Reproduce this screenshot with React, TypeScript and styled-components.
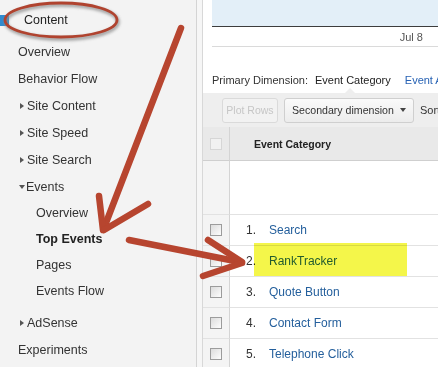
import styled, { createGlobalStyle } from "styled-components";

const GlobalStyle = createGlobalStyle`
  body {
    margin: 0;
    font-family: "Liberation Sans", Arial, sans-serif;
    background: #fff;
  }
`;

type NavEntry = {
  label: string;
  level: 0 | 1;
  caret?: "right" | "down";
  bold?: boolean;
  height: number;
  gapTop?: number;
};

const navEntries: NavEntry[] = [
  { label: "Overview", level: 0, height: 27 },
  { label: "Behavior Flow", level: 0, height: 27 },
  { label: "Site Content", level: 0, caret: "right", height: 27 },
  { label: "Site Speed", level: 0, caret: "right", height: 27 },
  { label: "Site Search", level: 0, caret: "right", height: 27 },
  { label: "Events", level: 0, caret: "down", height: 27 },
  { label: "Overview", level: 1, height: 26 },
  { label: "Top Events", level: 1, bold: true, height: 26 },
  { label: "Pages", level: 1, height: 26 },
  { label: "Events Flow", level: 1, height: 26 },
  { label: "AdSense", level: 0, caret: "right", height: 27, gapTop: 5 },
  { label: "Experiments", level: 0, height: 27 },
];

const events = ["Search", "RankTracker", "Quote Button", "Contact Form", "Telephone Click"];

export default function App() {
  return (
    <>
      <GlobalStyle />
      <Page>
        <Sidebar>
          <SectionHead>
            <SectionIcon />
            Content
          </SectionHead>
          {navEntries.map((item, i) => (
            <NavItem
              key={i}
              $level={item.level}
              $bold={item.bold}
              $height={item.height}
              $gapTop={item.gapTop ?? 0}
              $hasCaret={!!item.caret}
            >
              {item.caret === "right" && <CaretRight />}
              {item.caret === "down" && <CaretDown />}
              {item.label}
            </NavItem>
          ))}
        </Sidebar>
        <Gutter />
        <Main>
          <ChartWrap>
            <ChartFill />
            <Axis>Jul 8</Axis>
          </ChartWrap>
          <DimensionRow>
            <DimLabel>Primary Dimension:</DimLabel>
            <DimActive>Event Category</DimActive>
            <DimLink>Event Action</DimLink>
          </DimensionRow>
          <Toolbar>
            <PlotButton>Plot Rows</PlotButton>
            <SelectButton>
              Secondary dimension
              <SelectCaret />
            </SelectButton>
            <SortLabel>Sort Type:</SortLabel>
          </Toolbar>
          <Table>
            <CheckCell $header $height={34}>
              <Checkbox $disabled />
            </CheckCell>
            <HeadCell>Event Category</HeadCell>
            <CheckCell $height={54} />
            <BlankCell />
            {events.map((name, i) => (
              <Row key={name}>
                <CheckCell $height={31}>
                  <Checkbox />
                </CheckCell>
                <BodyCell>
                  {i === 1 && <Highlight />}
                  <RowNum>{i + 1}.</RowNum>
                  <RowLink>{name}</RowLink>
                </BodyCell>
              </Row>
            ))}
          </Table>
        </Main>

        <Annotations viewBox="0 0 438 367" width={438} height={367}>
          <defs>
            <filter id="soft" x="-20%" y="-50%" width="140%" height="200%">
              <feGaussianBlur stdDeviation="1.6" />
            </filter>
          </defs>
          <ellipse cx="62" cy="22" rx="56" ry="17" fill="none" stroke="#8a8a8a" strokeWidth="3.5" filter="url(#soft)" opacity="0.8" />
          <ellipse cx="61" cy="20" rx="56" ry="17" fill="none" stroke="#b0432f" strokeWidth="2.8" />
          <g stroke="#b7452f" strokeWidth="6.5" strokeLinecap="round" fill="none">
            <line x1="181" y1="28" x2="104" y2="228" />
            <line x1="99" y1="196" x2="103" y2="230" />
            <line x1="148" y1="204" x2="104" y2="230" />
            <line x1="129" y1="240" x2="240" y2="262" />
            <line x1="208" y1="240" x2="242" y2="262" />
            <line x1="203" y1="276" x2="242" y2="263" />
          </g>
        </Annotations>
      </Page>
    </>
  );
}

/* Styled Components */
const Page = styled.div`
  position: relative;
  display: flex;
  width: 438px;
  height: 367px;
  overflow: hidden;
  background: #fff;
`;

const Sidebar = styled.nav`
  width: 197px;
  flex-shrink: 0;
  box-sizing: border-box;
  background: #f3f3f3;
  border-right: 1px solid #d4d4d4;
  padding-top: 6px;
  display: flex;
  flex-direction: column;
  color: #333;
  font-size: 12.5px;
`;

const SectionHead = styled.div`
  display: flex;
  align-items: center;
  flex-shrink: 0;
  height: 28px;
  margin-bottom: 4px;
  color: #222;
`;

const SectionIcon = styled.span`
  width: 9px;
  height: 11px;
  background: #2f8bd0;
  margin-right: 15px;
`;

const NavItem = styled.div<{
  $level: number;
  $bold?: boolean;
  $height: number;
  $gapTop: number;
  $hasCaret: boolean;
}>`
  display: flex;
  align-items: center;
  flex-shrink: 0;
  height: ${({ $height }) => $height}px;
  margin-top: ${({ $gapTop }) => $gapTop}px;
  padding-left: ${({ $level, $hasCaret }) => ($level === 1 ? 36 : $hasCaret ? 20 : 18)}px;
  font-weight: ${({ $bold }) => ($bold ? "bold" : "normal")};
  color: ${({ $bold }) => ($bold ? "#222" : "#333")};
`;

const CaretRight = styled.span`
  width: 0;
  height: 0;
  border-left: 4px solid #555;
  border-top: 3.5px solid transparent;
  border-bottom: 3.5px solid transparent;
  margin-right: 3px;
`;

const CaretDown = styled.span`
  width: 0;
  height: 0;
  border-top: 4px solid #555;
  border-left: 3.5px solid transparent;
  border-right: 3.5px solid transparent;
  margin-right: 1px;
  margin-left: -1px;
`;

const Gutter = styled.div`
  width: 6px;
  flex-shrink: 0;
  box-sizing: border-box;
  background: #f6f6f6;
  border-right: 1px solid #d8d8d8;
`;

const Main = styled.main`
  flex: 1;
  min-width: 0;
  display: flex;
  flex-direction: column;
  background: #fff;

  & > * {
    flex-shrink: 0;
  }
`;

const ChartWrap = styled.div`
  padding-left: 9px;
`;

const ChartFill = styled.div`
  height: 26px;
  background: #e3eff8;
  border-bottom: 1px solid #3d3d3d;
`;

const Axis = styled.div`
  height: 19px;
  display: flex;
  align-items: center;
  justify-content: flex-end;
  padding-right: 15px;
  border-bottom: 1px solid #dadada;
  font-size: 11px;
  color: #555;
`;

const DimensionRow = styled.div`
  height: 46px;
  box-sizing: border-box;
  padding: 0 0 7px 9px;
  display: flex;
  align-items: flex-end;
  white-space: nowrap;
  font-size: 11px;
`;

const DimLabel = styled.span`
  color: #333;
  margin-right: 7px;
`;

const DimActive = styled.span`
  color: #222;
  margin-right: 14px;
`;

const DimLink = styled.span`
  color: #2762b4;
`;

const Toolbar = styled.div`
  position: relative;
  height: 34px;
  background: #eeeeee;
  display: flex;
  align-items: center;
  gap: 6px;
  padding-left: 19px;
  white-space: nowrap;

  & > * {
    flex-shrink: 0;
  }

  &::before {
    content: "";
    position: absolute;
    top: -5px;
    left: 142px;
    border-left: 5px solid transparent;
    border-right: 5px solid transparent;
    border-bottom: 5px solid #eeeeee;
  }
`;

const PlotButton = styled.div`
  width: 56px;
  height: 25px;
  box-sizing: border-box;
  display: flex;
  align-items: center;
  justify-content: center;
  border: 1px solid #dadada;
  border-radius: 3px;
  background: #f2f2f2;
  color: #c6c6c6;
  font-size: 10.5px;
`;

const SelectButton = styled.div`
  width: 130px;
  height: 25px;
  box-sizing: border-box;
  display: flex;
  align-items: center;
  justify-content: space-between;
  padding: 0 7px 0 7px;
  border: 1px solid #cfcfcf;
  border-radius: 3px;
  background: linear-gradient(#fafafa, #ececec);
  color: #333;
  font-size: 10.6px;
`;

const SelectCaret = styled.span`
  width: 0;
  height: 0;
  border-top: 4px solid #444;
  border-left: 3.5px solid transparent;
  border-right: 3.5px solid transparent;
`;

const SortLabel = styled.span`
  font-size: 11px;
  color: #333;
`;

const Table = styled.div`
  display: grid;
  grid-template-columns: 27px 1fr;
`;

const Row = styled.div`
  display: contents;
`;

const CheckCell = styled.div<{ $header?: boolean; $height?: number }>`
  height: ${({ $height }) => $height ?? 31}px;
  box-sizing: border-box;
  display: flex;
  align-items: center;
  justify-content: center;
  background: ${({ $header }) => ($header ? "#e9e9e9" : "#f4f4f4")};
  border-right: 1px solid #d4d4d4;
  border-bottom: 1px solid ${({ $header }) => ($header ? "#cfcfcf" : "#e2e2e2")};
`;

const Checkbox = styled.span<{ $disabled?: boolean }>`
  width: 12px;
  height: 12px;
  box-sizing: border-box;
  border: 1px solid ${({ $disabled }) => ($disabled ? "#d6d6d6" : "#9c9c9c")};
  background: ${({ $disabled }) =>
    $disabled ? "#f1f1f1" : "linear-gradient(135deg, #dcdcdc, #fdfdfd)"};
`;

const HeadCell = styled.div`
  height: 34px;
  box-sizing: border-box;
  display: flex;
  align-items: center;
  padding-left: 24px;
  background: #e9e9e9;
  border-bottom: 1px solid #cfcfcf;
  font-size: 10.5px;
  font-weight: bold;
  color: #222;
  white-space: nowrap;
`;

const BlankCell = styled.div`
  height: 54px;
  box-sizing: border-box;
  border-bottom: 1px solid #e2e2e2;
`;

const BodyCell = styled.div`
  position: relative;
  height: 31px;
  box-sizing: border-box;
  display: flex;
  align-items: center;
  padding-left: 16px;
  border-bottom: 1px solid #e2e2e2;
  font-size: 12px;
  white-space: nowrap;
`;

const Highlight = styled.span`
  position: absolute;
  left: 24px;
  top: -3px;
  bottom: 0;
  width: 153px;
  background: #f4f64a;
  mix-blend-mode: multiply;
  z-index: 1;
`;

const RowNum = styled.span`
  width: 23px;
  color: #333;
`;

const RowLink = styled.span`
  color: #245f9c;
`;

const Annotations = styled.svg`
  position: absolute;
  left: 0;
  top: 0;
  pointer-events: none;
`;
